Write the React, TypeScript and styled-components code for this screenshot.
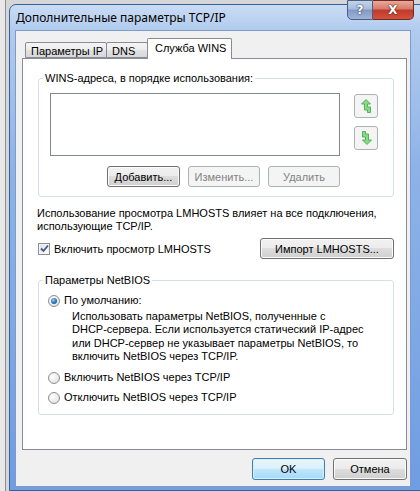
import React from "react";
import styled, { createGlobalStyle, css } from "styled-components";

const Global = createGlobalStyle`
  html, body { margin: 0; padding: 0; }
  body {
    width: 420px; height: 491px; overflow: hidden;
    font-family: "Liberation Sans", Arial, sans-serif;
    font-size: 11px; color: #000;
  }
  * { box-sizing: border-box; }
`;

const Screen = styled.div`
  width: 420px;
  height: 491px;
  overflow: hidden;
  display: flex;
  padding: 4px 0 0 9px;
  background:
    linear-gradient(90deg, #e8e8e8 0 5px, #8d8d8d 5px 6px, #d6d6d6 6px 100%);
`;

const Frame = styled.div`
  position: relative;
  flex: none;
  width: 424px;
  height: 487px;
  border: 1px solid #34609e;
  border-radius: 7px 7px 0 0;
  background: linear-gradient(180deg, #cadcf3 0px, #b1cbee 25px, #8fb3e8 160px, #6f9de2 100%);
  display: flex;
  flex-direction: column;
`;

const TitleBar = styled.div`
  height: 25px;
  display: flex;
  align-items: center;
  padding: 0 0 1px 6px;
  font-family: "Noto Sans", "Liberation Sans", sans-serif;
  font-size: 12px;
  color: #000;
  white-space: nowrap;
`;

const CaptionButtons = styled.div`
  position: absolute;
  top: -5px;
  left: 337px;
  display: flex;
  height: 20px;
`;

const CaptionBtn = styled.div<{ $close?: boolean }>`
  width: ${(p) => (p.$close ? 41 : 26)}px;
  height: 20px;
  display: flex;
  align-items: center;
  justify-content: center;
  border: 1px solid #4b5f80;
  font-family: "DejaVu Sans", sans-serif;
  font-weight: bold;
  font-size: 12px;
  color: #fff;
  text-shadow: 0 0 2px #2c3a55, 0 0 1px #2c3a55;
  ${(p) =>
    p.$close
      ? css`
          border-color: #6d2a24;
          border-left: none;
          border-radius: 0 0 5px 0;
          background: linear-gradient(180deg, #e9a99c 0%, #d67a66 45%, #c2392a 50%, #d2523c 100%);
          text-shadow: 0 0 2px #5a1a12, 0 0 1px #5a1a12;
        `
      : css`
          border-radius: 0 0 0 5px;
          background: linear-gradient(180deg, #c4d3ea 0%, #a6bbdb 45%, #8199c2 50%, #9fb5d8 100%);
        `}
`;

const Client = styled.div`
  width: 396px;
  flex: 1;
  margin: 0 0 3px 5px;
  background: #f0f0f0;
  border: 1px solid #7d9cc9;
  padding: 7px 3px 0 6px;
  display: flex;
  flex-direction: column;
`;

const TabRow = styled.div`
  display: flex;
  align-items: flex-end;
  height: 20px;
  padding-left: 3px;
  position: relative;
  z-index: 1;
`;

const Tab = styled.div<{ $active?: boolean; $w: number }>`
  width: ${(p) => p.$w}px;
  height: ${(p) => (p.$active ? 21 : 16)}px;
  margin-bottom: ${(p) => (p.$active ? -1 : 0)}px;
  margin-right: -1px;
  border: 1px solid #898c95;
  border-bottom: ${(p) => (p.$active ? "none" : "1px solid #898c95")};
  border-radius: 2px 2px 0 0;
  padding: ${(p) => (p.$active ? "0 0 2px 7px" : "1px 0 0 5px")};
  display: flex;
  align-items: center;
  white-space: nowrap;
  background: ${(p) =>
    p.$active
      ? "#ffffff"
      : "linear-gradient(180deg, #f4f4f4 0%, #ededed 50%, #e2e2e2 50%, #d8d8d8 100%)"};
`;

const Panel = styled.div`
  width: 385px;
  height: 392px;
  border: 1px solid #898c95;
  background: #fff;
  padding: 13px 12px 0 15px;
  display: flex;
  flex-direction: column;
`;

const Group = styled.fieldset`
  margin: 0;
  padding: 0;
  border: 1px solid #d5dfe5;
  border-radius: 3px;
  min-width: 0;
`;

const Legend = styled.legend`
  margin-left: 4px;
  padding: 0 2px;
  line-height: 13px;
  white-space: nowrap;
`;

const WinsBody = styled.div`
  display: flex;
  gap: 14px;
  padding: 8px 0 9px 11px;
`;

const ListCol = styled.div`
  display: flex;
  flex-direction: column;
  gap: 10px;
  width: 290px;
`;

const ListBox = styled.div`
  height: 63px;
  border: 1px solid #828790;
  background: #fff;
`;

const ButtonRow = styled.div<{ $gap?: number }>`
  display: flex;
  justify-content: flex-end;
  gap: ${(p) => p.$gap ?? 8}px;
`;

const Button = styled.button<{ $w: number; $h?: number; $default?: boolean }>`
  width: ${(p) => p.$w}px;
  height: ${(p) => p.$h ?? 21}px;
  padding: 0;
  font: inherit;
  color: #000;
  border: 1px solid #707070;
  border-radius: 3px;
  box-shadow: inset 0 0 0 1px #fbfbfb;
  background: linear-gradient(180deg, #f2f2f2 0%, #ebebeb 50%, #dddddd 50%, #cfcfcf 100%);
  display: flex;
  align-items: center;
  justify-content: center;
  white-space: nowrap;
  ${(p) =>
    p.$default &&
    css`
      border-color: #3c7fb1;
      box-shadow: inset 0 0 0 1px #d6f1fd;
      background: linear-gradient(180deg, #eaf6fd 0%, #d9f0fc 50%, #bee6fd 50%, #a7d9f5 100%);
    `}
  &:disabled {
    color: #838383;
    border-color: #adb2b5;
    box-shadow: none;
    background: #f4f4f4;
  }
`;

const ArrowCol = styled.div`
  display: flex;
  flex-direction: column;
  gap: 8px;
  padding-top: 1px;
`;

const ArrowBtn = styled.div`
  width: 24px;
  height: 24px;
  border: 1px solid #adb2b5;
  border-radius: 3px;
  background: #f4f4f4;
  display: flex;
  align-items: center;
  justify-content: center;
`;

const Para = styled.div`
  margin-top: 10px;
  line-height: 13px;
  white-space: nowrap;
  margin-left: -1px;
`;

const CheckRow = styled.div`
  margin-top: 5px;
  display: flex;
  align-items: center;
  justify-content: space-between;
`;

const Check = styled.label`
  display: flex;
  align-items: center;
  gap: 4px;
  white-space: nowrap;
`;

const Box = styled.span`
  width: 12px;
  height: 12px;
  border: 1px solid #8e8f8f;
  background: linear-gradient(135deg, #dcdcdc 0%, #f4f4f4 60%, #ffffff 100%);
  box-shadow: inset 0 0 0 1px #f4f4f4;
  display: flex;
  align-items: center;
  justify-content: center;
`;

const NetGroup = styled(Group)`
  margin-top: 15px;
`;

const NetBody = styled.div`
  padding: 7px 0 10px 9px;
  display: flex;
  flex-direction: column;
`;

const RadioRow = styled.label<{ $mt?: number }>`
  display: flex;
  align-items: center;
  gap: 4px;
  line-height: 13px;
  margin-top: ${(p) => p.$mt ?? 0}px;
  white-space: nowrap;
`;

const RadioDot = styled.span<{ $on?: boolean }>`
  width: 12px;
  height: 12px;
  border-radius: 50%;
  border: 1px solid #8e8f8f;
  background: radial-gradient(circle at 35% 35%, #ffffff 0%, #e6e6e6 70%, #d2d2d2 100%);
  display: flex;
  align-items: center;
  justify-content: center;
  &::after {
    content: "";
    display: ${(p) => (p.$on ? "block" : "none")};
    width: 6px;
    height: 6px;
    border-radius: 50%;
    background: radial-gradient(circle at 40% 35%, #8ad0f7 0%, #2a6fba 55%, #1a3f78 100%);
  }
`;

const Desc = styled.div`
  margin: 3px 0 0 24px;
  line-height: 13.3px;
  white-space: nowrap;
`;

const Footer = styled.div`
  margin-top: 8px;
  display: flex;
  justify-content: flex-end;
  gap: 8px;
`;

const UpArrow = ({ flip }: { flip?: boolean }) => (
  <svg width="11" height="14" viewBox="0 0 11 14" style={flip ? { transform: "rotate(180deg)" } : undefined}>
    <polygon
      points="5,0.5 9.5,5 6.5,5 6.5,8 9.5,8 9.5,13.5 6.5,13.5 6.5,11 3.5,11 3.5,5 0.5,5"
      fill="#86dc86"
      stroke="#4aab4a"
      strokeWidth="0.9"
      strokeLinejoin="round"
    />
  </svg>
);

const CheckMark = () => (
  <svg width="9" height="9" viewBox="0 0 9 9">
    <path d="M1 4.5 L3.5 7 L8 1.5" fill="none" stroke="#3c5a94" strokeWidth="1.8" />
  </svg>
);

export default function App() {
  return (
    <>
      <Global />
      <Screen>
        <Frame>
          <TitleBar>Дополнительные параметры TCP/IP</TitleBar>
          <CaptionButtons>
            <CaptionBtn>?</CaptionBtn>
            <CaptionBtn $close>X</CaptionBtn>
          </CaptionButtons>
          <Client>
            <TabRow>
              <Tab $w={82}>Параметры IP</Tab>
              <Tab $w={42}>DNS</Tab>
              <Tab $w={85} $active>Служба WINS</Tab>
            </TabRow>
            <Panel>
              <Group>
                <Legend>WINS-адреса, в порядке использования:</Legend>
                <WinsBody>
                  <ListCol>
                    <ListBox />
                    <ButtonRow $gap={8}>
                      <Button $w={73}>Добавить...</Button>
                      <Button $w={72} disabled>Изменить...</Button>
                      <Button $w={72} disabled>Удалить</Button>
                    </ButtonRow>
                  </ListCol>
                  <ArrowCol>
                    <ArrowBtn><UpArrow /></ArrowBtn>
                    <ArrowBtn><UpArrow flip /></ArrowBtn>
                  </ArrowCol>
                </WinsBody>
              </Group>
              <Para>
                Использование просмотра LMHOSTS влияет на все подключения,
                <br />
                использующие TCP/IP.
              </Para>
              <CheckRow>
                <Check>
                  <Box><CheckMark /></Box>
                  Включить просмотр LMHOSTS
                </Check>
                <Button $w={134}>Импорт LMHOSTS...</Button>
              </CheckRow>
              <NetGroup>
                <Legend>Параметры NetBIOS</Legend>
                <NetBody>
                  <RadioRow>
                    <RadioDot $on />
                    По умолчанию:
                  </RadioRow>
                  <Desc>
                    Использовать параметры NetBIOS, полученные с
                    <br />
                    DHCP-сервера. Если используется статический IP-адрес
                    <br />
                    или DHCP-сервер не указывает параметры NetBIOS, то
                    <br />
                    включить NetBIOS через TCP/IP.
                  </Desc>
                  <RadioRow $mt={8}>
                    <RadioDot />
                    Включить NetBIOS через TCP/IP
                  </RadioRow>
                  <RadioRow $mt={7}>
                    <RadioDot />
                    Отключить NetBIOS через TCP/IP
                  </RadioRow>
                </NetBody>
              </NetGroup>
            </Panel>
            <Footer>
              <Button $w={73} $h={22} $default>OK</Button>
              <Button $w={74} $h={22}>Отмена</Button>
            </Footer>
          </Client>
        </Frame>
      </Screen>
    </>
  );
}
